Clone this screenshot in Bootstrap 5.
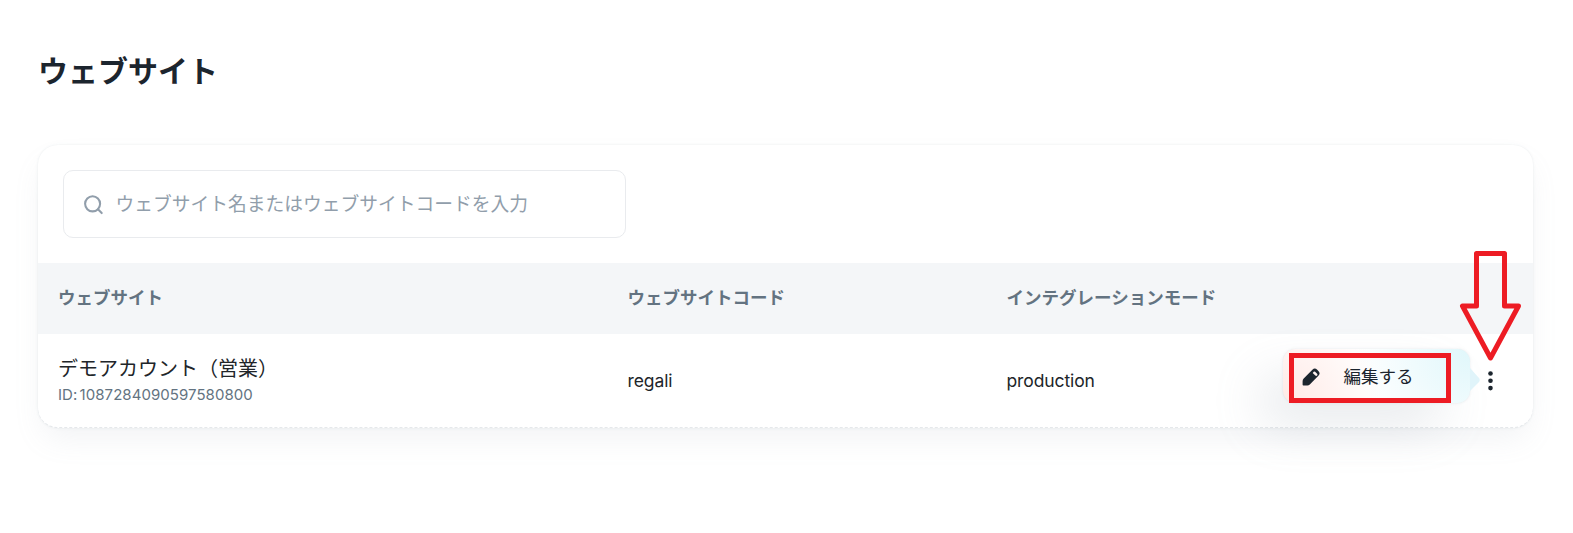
<!DOCTYPE html>
<html lang="ja">
<head>
<meta charset="utf-8">
<meta name="viewport" content="width=device-width, initial-scale=1">
<title>ウェブサイト</title>
<link rel="stylesheet" href="https://cdn.jsdelivr.net/npm/bootstrap@5.3.0/dist/css/bootstrap.min.css">
<style>
  body { font-family: Inter, "Noto Sans CJK JP", sans-serif; color: #1c252e; background: #fff; }
  .page { padding: 49px 40px 0 38px; min-height: 533px; }
  .page-title { font-size: 30px; line-height: 45px; font-weight: 700; margin-bottom: 51px; }
  .site-card { border: 0; border-radius: 20px; height: 283px; background: #fff;
    box-shadow: 0 0 2.5px rgba(145,158,171,.2), 0 15px 30px -5px rgba(145,158,171,.12); }
  .search-area { padding: 25px; height: 118px; }
  .search-box { width: 563px; height: 68px; border: 1px solid #e9ebee; border-radius: 10px; padding-left: 18px; gap: 10px; }
  .search-box .form-control { font-size: 18.75px; color: #1c252e; margin-top: 2px; }
  .search-box .form-control::placeholder { color: #919eab; opacity: 1; }
  .site-table { table-layout: fixed; width: 1495px; }
  .site-table > :not(caption) > * > * { padding: 0 20px; border: 0; background: transparent; color: inherit; vertical-align: middle; }
  .site-table thead th { height: 71px; font-size: 17.5px; line-height: 26px; font-weight: 700; color: #637381; background: #f4f6f8; padding-bottom: 2px; }
  .site-table tbody tr { height: 93px; }
  .site-table tbody td { font-size: 17.5px; line-height: 26px; letter-spacing: -.1px; }
  .site-table .site-cell { padding-bottom: 2px; }
  .site-foot { position: absolute; bottom: 0; left: 0; right: 0; height: 20px; border-bottom: 1px dashed rgba(145,158,171,.24); border-radius: 0 0 20px 20px; pointer-events: none; }
  .site-name { font-size: 20px; line-height: 30px; letter-spacing: 0; }
  .site-id { font-size: 15px; line-height: 22px; color: #637381; letter-spacing: .05px; word-spacing: -2px; }
  .action-menu { position: absolute; left: 1244.5px; top: 204px; width: 187px; height: 54px; border-radius: 12.5px; padding: 3px 0 0 16px;
    font-size: 17.5px; gap: 20px;
    background: radial-gradient(circle at 100% 0, #e0f7fb 0, rgba(224,247,251,0) 115px), radial-gradient(circle at 0 100%, #ffe9e5 0, rgba(255,233,229,0) 100px), #fff;
    box-shadow: 0 0 2.5px rgba(145,158,171,.24), -25px 25px 50px -5px rgba(145,158,171,.24); }
  .menu-tip { position: absolute; right: -10px; top: 19px; }
  .red-frame { position: absolute; left: 6.5px; top: 4px; width: 162px; height: 50px; border: 5px solid #ed1c24; }
  .red-arrow { position: absolute; left: 1420px; top: 104px; }
</style>
</head>
<body>
<main class="page">
  <h1 class="page-title">ウェブサイト</h1>
  <section class="card site-card position-relative">
    <div class="search-area">
      <div class="search-box d-flex align-items-center">
        <svg width="25" height="25" viewBox="0 0 25 25" fill="none" stroke="#919eab" stroke-width="2.2" stroke-linecap="round" aria-hidden="true"><circle cx="11.3" cy="11.8" r="8"/><path d="M17 17.6l4 4"/></svg>
        <input class="form-control border-0 p-0 shadow-none bg-transparent" placeholder="ウェブサイト名またはウェブサイトコードを入力">
      </div>
    </div>
    <table class="table site-table mb-0">
      <colgroup><col style="width:569.5px"><col style="width:379px"><col style="width:460.5px"><col style="width:86px"></colgroup>
      <thead><tr><th>ウェブサイト</th><th>ウェブサイトコード</th><th>インテグレーションモード</th><th></th></tr></thead>
      <tbody><tr>
        <td class="site-cell"><div class="site-name">デモアカウント（営業）</div><div class="site-id">ID: 1087284090597580800</div></td>
        <td>regali</td>
        <td>production</td>
        <td class="text-center"><svg class="d-block mx-auto" width="9" height="24" viewBox="0 0 9 24" fill="#1c252e" aria-hidden="true"><circle cx="4.5" cy="4.5" r="2.3"/><circle cx="4.5" cy="11.8" r="2.3"/><circle cx="4.5" cy="19.1" r="2.3"/></svg></td>
      </tr></tbody>
    </table>
    <div class="site-foot"></div>
    <div class="action-menu d-flex align-items-center">
      <svg width="25" height="25" viewBox="0 0 25 25" fill="#1c252e" aria-hidden="true"><path fill-rule="evenodd" d="M4.7 13.5L13.4 4.8a3.4 3.4 0 0 1 4.8 0l1.2 1.2a3.4 3.4 0 0 1 0 4.8L10.8 19.6a3.5 3.5 0 0 1-2.4 1H4.4a.8.8 0 0 1-.8-.8v-3.6a3.8 3.8 0 0 1 1.1-2.7zM13.7 8l2.6 2.600q.9.8 1.800 0 .9-.9 0-1.800l-2-2q-.7-.6-1.400 0z"/></svg>
      <span>編集する</span>
      <svg class="menu-tip" width="10" height="24" viewBox="0 0 10 24" aria-hidden="true"><path d="M0 0L9 10Q10.5 12 9 14L0 23z" fill="#e0f4fa"/></svg>
      <div class="red-frame"></div>
    </div>
    <svg class="red-arrow" width="66" height="116" viewBox="0 0 66 116" fill="none" stroke="#ed1c24" stroke-width="5" stroke-linejoin="round" aria-hidden="true"><path d="M18.5 4.5h28V57H60.500L32.500 109 4.500 57h14z"/></svg>
  </section>
</main>
<script src="https://cdn.jsdelivr.net/npm/bootstrap@5.3.0/dist/js/bootstrap.bundle.min.js"></script>
</body>
</html>
